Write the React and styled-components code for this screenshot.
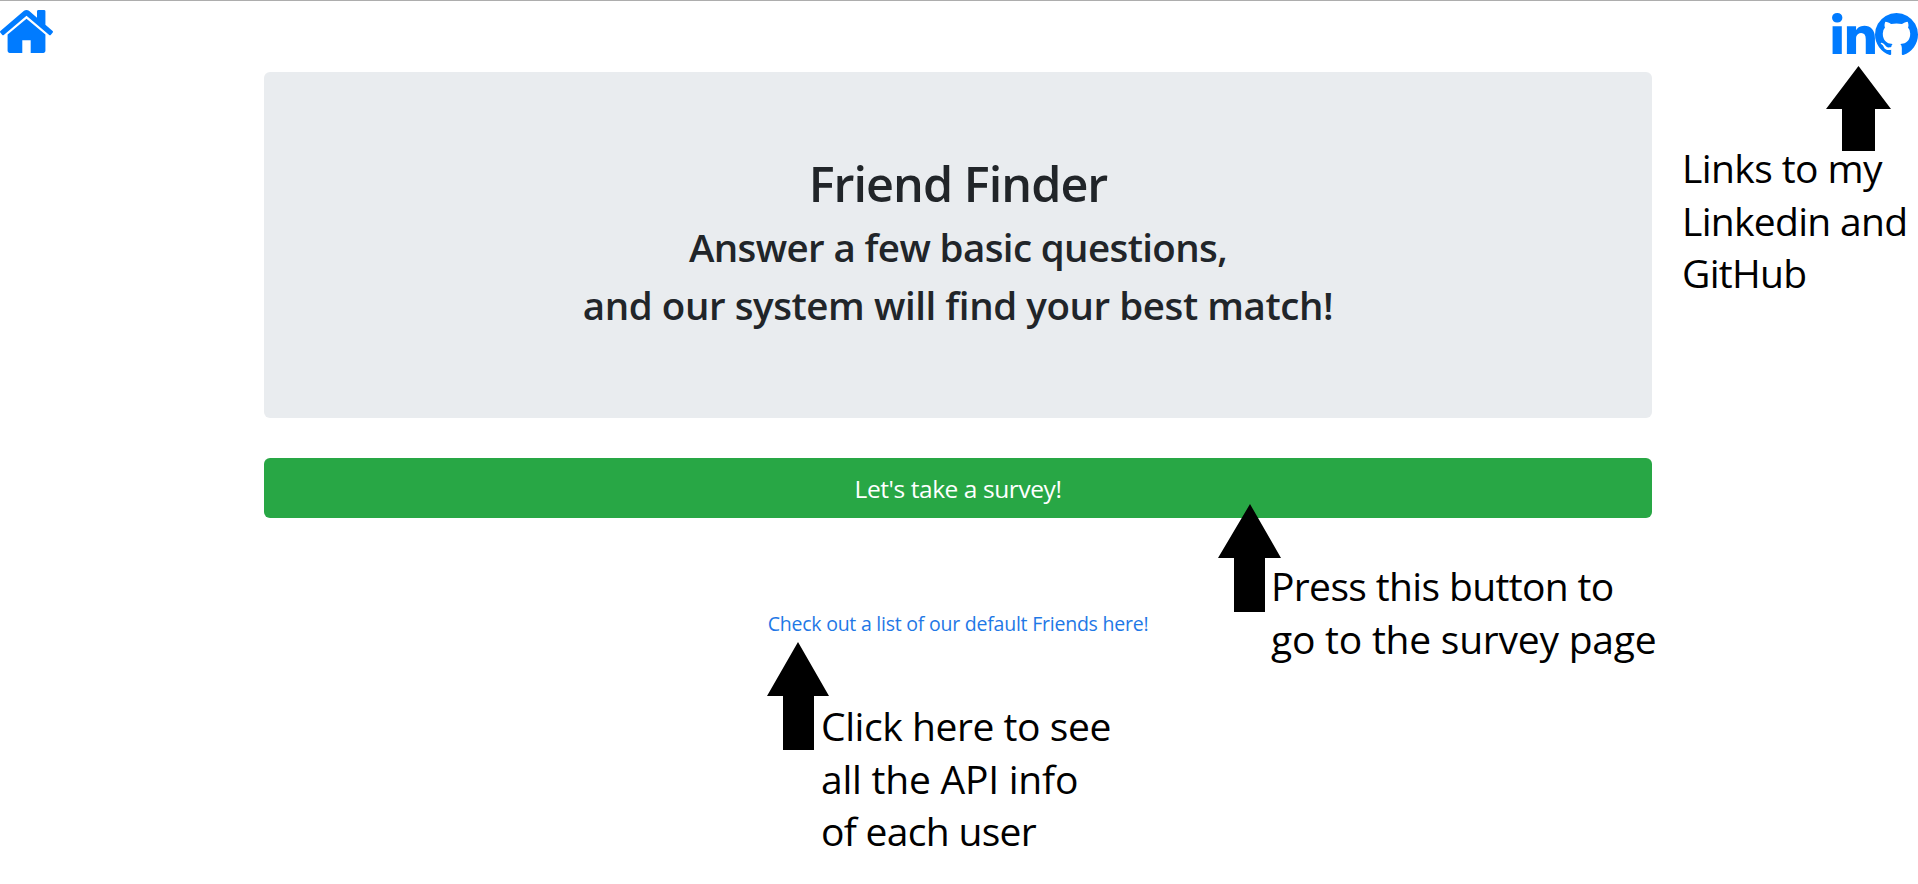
import React from "react";
import styled, { createGlobalStyle } from "styled-components";

const GlobalStyle = createGlobalStyle`
  *, *::before, *::after { box-sizing: border-box; }
  body {
    margin: 0;
    overflow: hidden;
    background: #fff;
    color: #212529;
    font-family: "Open Sans", "Noto Sans", sans-serif;
    font-size: 20px;
    line-height: 1.5;
  }
`;

const Page = styled.div`
  position: relative;
  height: 884px;
  overflow: hidden;
  border-top: 1px solid #adadad;
`;

const TopBar = styled.nav`
  display: flex;
  justify-content: space-between;
  height: 71px;
`;

const IconLink = styled.a`
  color: #007bff;
`;

const Icon = styled.svg`
  display: block;
  fill: currentColor;
`;

const HomeSlot = styled.div`
  padding-top: 9px;
`;

const SocialLinks = styled.div`
  display: flex;
  padding-top: 12px;
`;

const Container = styled.main`
  width: 1388px;
  margin-left: 264px;
  text-align: center;
`;

const Jumbotron = styled.header`
  padding: 81px 40px 79px;
  height: 346px;
  border-radius: 6px;
  background: #e9ecef;
`;

const Title = styled.h1`
  margin: 0 0 10px;
  font-size: 48.5px;
  font-weight: 600;
  line-height: 60px;
  letter-spacing: -0.95px;
`;

const Subtitle = styled.h2`
  margin: 0 0 10px;
  font-size: 38.5px;
  font-weight: 600;
  line-height: 48px;
  white-space: nowrap;
  letter-spacing: ${(p) => p.$spacing}px;
`;

const SurveyButton = styled.button`
  display: block;
  width: 100%;
  height: 60px;
  margin-top: 40px;
  padding: 2px 0 0;
  border: 0;
  border-radius: 6px;
  background: #28a745;
  color: #fff;
  font: inherit;
  font-size: 24.5px;
  letter-spacing: -0.43px;
`;

const FriendsLink = styled.a`
  display: block;
  margin-top: 91px;
  color: #1f78e6;
  font-size: 19.5px;
  letter-spacing: -0.23px;
  text-decoration: none;
`;

const Arrow = styled.svg`
  position: absolute;
  left: ${(p) => p.$x}px;
  top: ${(p) => p.$y - 1}px;
  fill: #000;
`;

const Note = styled.p`
  position: absolute;
  left: ${(p) => p.$x}px;
  top: ${(p) => p.$y}px;
  margin: 0;
  color: #000;
  font-size: 39px;
  line-height: 52.5px;
  white-space: nowrap;
`;

const NoteLine = styled.span`
  display: block;
  letter-spacing: ${(p) => p.$spacing}px;
`;

const HomeIcon = () => (
  <Icon width="53" height="43" viewBox="89 253 1614 1283" preserveAspectRatio="none">
    <path d="M1472 992v480q0 26-19 45t-45 19h-384v-384h-256v384h-384q-26 0-45-19t-19-45v-480q0-1 .5-3t.5-3l575-474 575 474q1 2 1 6zm223-69l-62 74q-8 9-21 11h-3q-13 0-21-7l-692-577-692 577q-12 8-24 7-13-2-21-11l-62-74q-8-10-7-23.5t11-21.5l719-599q32-26 76-26t76 26l244 204v-195q0-14 9-23t23-9h192q14 0 23 9t9 23v408l219 182q10 8 11 21.5t-7 23.5z" />
  </Icon>
);

const LinkedinIcon = () => (
  <Icon width="43" height="41" viewBox="0 148 1536 1468">
    <path d="M349 625v991h-330v-991h330zm21-306q1 73-50.5 122t-135.5 49h-2q-82 0-132-49t-50-122q0-74 51.5-122.5t134.5-48.5 133 48.5 51 122.5zm1166 729v568h-329v-530q0-105-40.5-164.5t-126.5-59.5q-63 0-105.5 34.5t-63.5 85.5q-11 30-11 81v553h-329q2-399 2-647t-1-296l-1-47h329v144h-2q20-32 41-56t56.5-52 87-43.5 114.5-15.5q171 0 275 113.5t104 332.5z" />
  </Icon>
);

const GithubIcon = () => (
  <Icon width="43" height="42" viewBox="128 128 1536 1500">
    <path d="M896 128q209 0 385.5 103t279.5 279.5 103 385.5q0 251-146.5 451.5t-378.5 277.5q-27 5-40-7t-13-30q0-3 .5-76.5t.5-134.5q0-97-52-142 57-6 102.5-18t94-39 81-66.5 53-105 20.5-150.5q0-119-79-206 37-91-8-204-28-9-81 11t-92 44l-38 24q-93-26-192-26t-192 26q-16-11-42.5-27t-83.5-38.5-85-13.5q-45 113-8 204-79 87-79 206 0 85 20.5 150t52.5 105 80.5 67 94 39 102.5 18q-39 36-49 103-21 10-45 15t-57 5-65.5-21.5-55.5-62.5q-19-32-48.5-52t-49.5-24l-20-3q-21 0-29 4.5t-5 11.5 9 14 13 12l7 5q22 10 43.5 38t31.5 51l10 23q13 38 44 61.5t67 30 69.5 7 55.5-3.5l23-4q0 38 .5 88.5t.5 54.5q0 18-13 30t-40 7q-232-77-378.5-277.5t-146.5-451.5q0-209 103-385.5t279.5-279.5 385.5-103z" />
  </Icon>
);

export default function App() {
  return (
    <Page>
      <GlobalStyle />
      <TopBar>
        <HomeSlot>
          <IconLink><HomeIcon /></IconLink>
        </HomeSlot>
        <SocialLinks>
          <IconLink><LinkedinIcon /></IconLink>
          <IconLink><GithubIcon /></IconLink>
        </SocialLinks>
      </TopBar>
      <Container>
        <Jumbotron>
          <Title>Friend Finder</Title>
          <Subtitle $spacing={-0.62}>Answer a few basic questions,</Subtitle>
          <Subtitle $spacing={-0.43}>and our system will find your best match!</Subtitle>
        </Jumbotron>
        <SurveyButton>Let's take a survey!</SurveyButton>
        <FriendsLink>Check out a list of our default Friends here!</FriendsLink>
      </Container>

      <Arrow $x={1826} $y={66} width="65" height="85">
        <path d="M32.5 0L65 43H49V85H16V43H0Z" />
      </Arrow>
      <Note $x={1682} $y={141}>
        <NoteLine $spacing={-0.6}>Links to my</NoteLine>
        <NoteLine $spacing={-0.7}>Linkedin and</NoteLine>
        <NoteLine $spacing={-0.7}>GitHub</NoteLine>
      </Note>

      <Arrow $x={1218} $y={504} width="63" height="108">
        <path d="M32 0L63 54H47V108H16V54H0Z" />
      </Arrow>
      <Note $x={1271} $y={559}>
        <NoteLine $spacing={-0.64}>Press this button to</NoteLine>
        <NoteLine $spacing={-0.23}>go to the survey page</NoteLine>
      </Note>

      <Arrow $x={767} $y={642} width="62" height="108">
        <path d="M31 0L62 54H47V108H16V54H0Z" />
      </Arrow>
      <Note $x={821} $y={699}>
        <NoteLine $spacing={-0.43}>Click here to see</NoteLine>
        <NoteLine $spacing={-0.23}>all the API info</NoteLine>
        <NoteLine $spacing={-0.7}>of each user</NoteLine>
      </Note>
    </Page>
  );
}
